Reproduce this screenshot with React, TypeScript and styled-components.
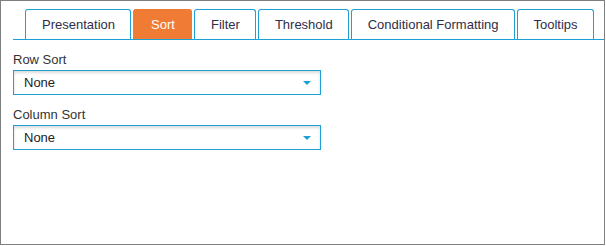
import styled, { createGlobalStyle } from 'styled-components'

const GlobalStyle = createGlobalStyle`
    html, body {
        margin: 0;
        padding: 0;
        background: #ffffff;
    }
    body {
        font-family: "Liberation Sans", Arial, sans-serif;
        font-size: 13px;
        color: #333333;
    }
`

const tabs = ['Presentation', 'Sort', 'Filter', 'Threshold', 'Conditional Formatting', 'Tooltips']

const fields = ['Row Sort', 'Column Sort']

const App = () => {
    return (
        <>
            <GlobalStyle />
            <Panel>
                <TabStrip>
                    {tabs.map((tab) => (
                        <Tab key={tab} $active={tab === 'Sort'}>
                            {tab}
                        </Tab>
                    ))}
                </TabStrip>
                <Form>
                    {fields.map((field) => (
                        <Field key={field}>
                            <Label>{field}</Label>
                            <Select>
                                <span>None</span>
                                <Caret />
                            </Select>
                        </Field>
                    ))}
                </Form>
            </Panel>
        </>
    )
}

export default App

const Panel = styled.div`
    box-sizing: border-box;
    width: 605px;
    height: 245px;
    border: 1px solid #7f7f7f;
    padding: 8px 0 0 12px;
`

const TabStrip = styled.div`
    display: flex;
    gap: 2px;
    padding-left: 12px;
    border-bottom: 1px solid #1ba1d6;
`

const Tab = styled.div<{ $active?: boolean }>`
    height: 29px;
    line-height: 29px;
    padding: 0 15px 0 16px;
    min-width: ${({ $active }) => ($active ? '26px' : '0')};
    text-align: center;
    border: 1px solid ${({ $active }) => ($active ? '#f07b34' : '#1ba1d6')};
    border-bottom: none;
    border-radius: 3px 3px 0 0;
    background: ${({ $active }) => ($active ? '#f07b34' : '#ffffff')};
    color: ${({ $active }) => ($active ? '#ffffff' : '#2e2e48')};
    white-space: nowrap;
`

const Form = styled.div`
    display: flex;
    flex-direction: column;
    gap: 12px;
    padding-top: 12px;
`

const Field = styled.div`
    display: flex;
    flex-direction: column;
    gap: 3px;
`

const Label = styled.div`
    line-height: 15px;
    color: #333333;
`

const Select = styled.div`
    box-sizing: border-box;
    width: 308px;
    height: 25px;
    display: flex;
    align-items: center;
    justify-content: space-between;
    padding: 0 9px 0 10px;
    border: 1px solid #1ba1d6;
    box-shadow: inset 0 2px 3px rgba(0, 0, 0, 0.14);
    color: #222222;
`

const Caret = styled.span`
    width: 0;
    height: 0;
    border-left: 4px solid transparent;
    border-right: 4px solid transparent;
    border-top: 4px solid #1ba1d6;
`
